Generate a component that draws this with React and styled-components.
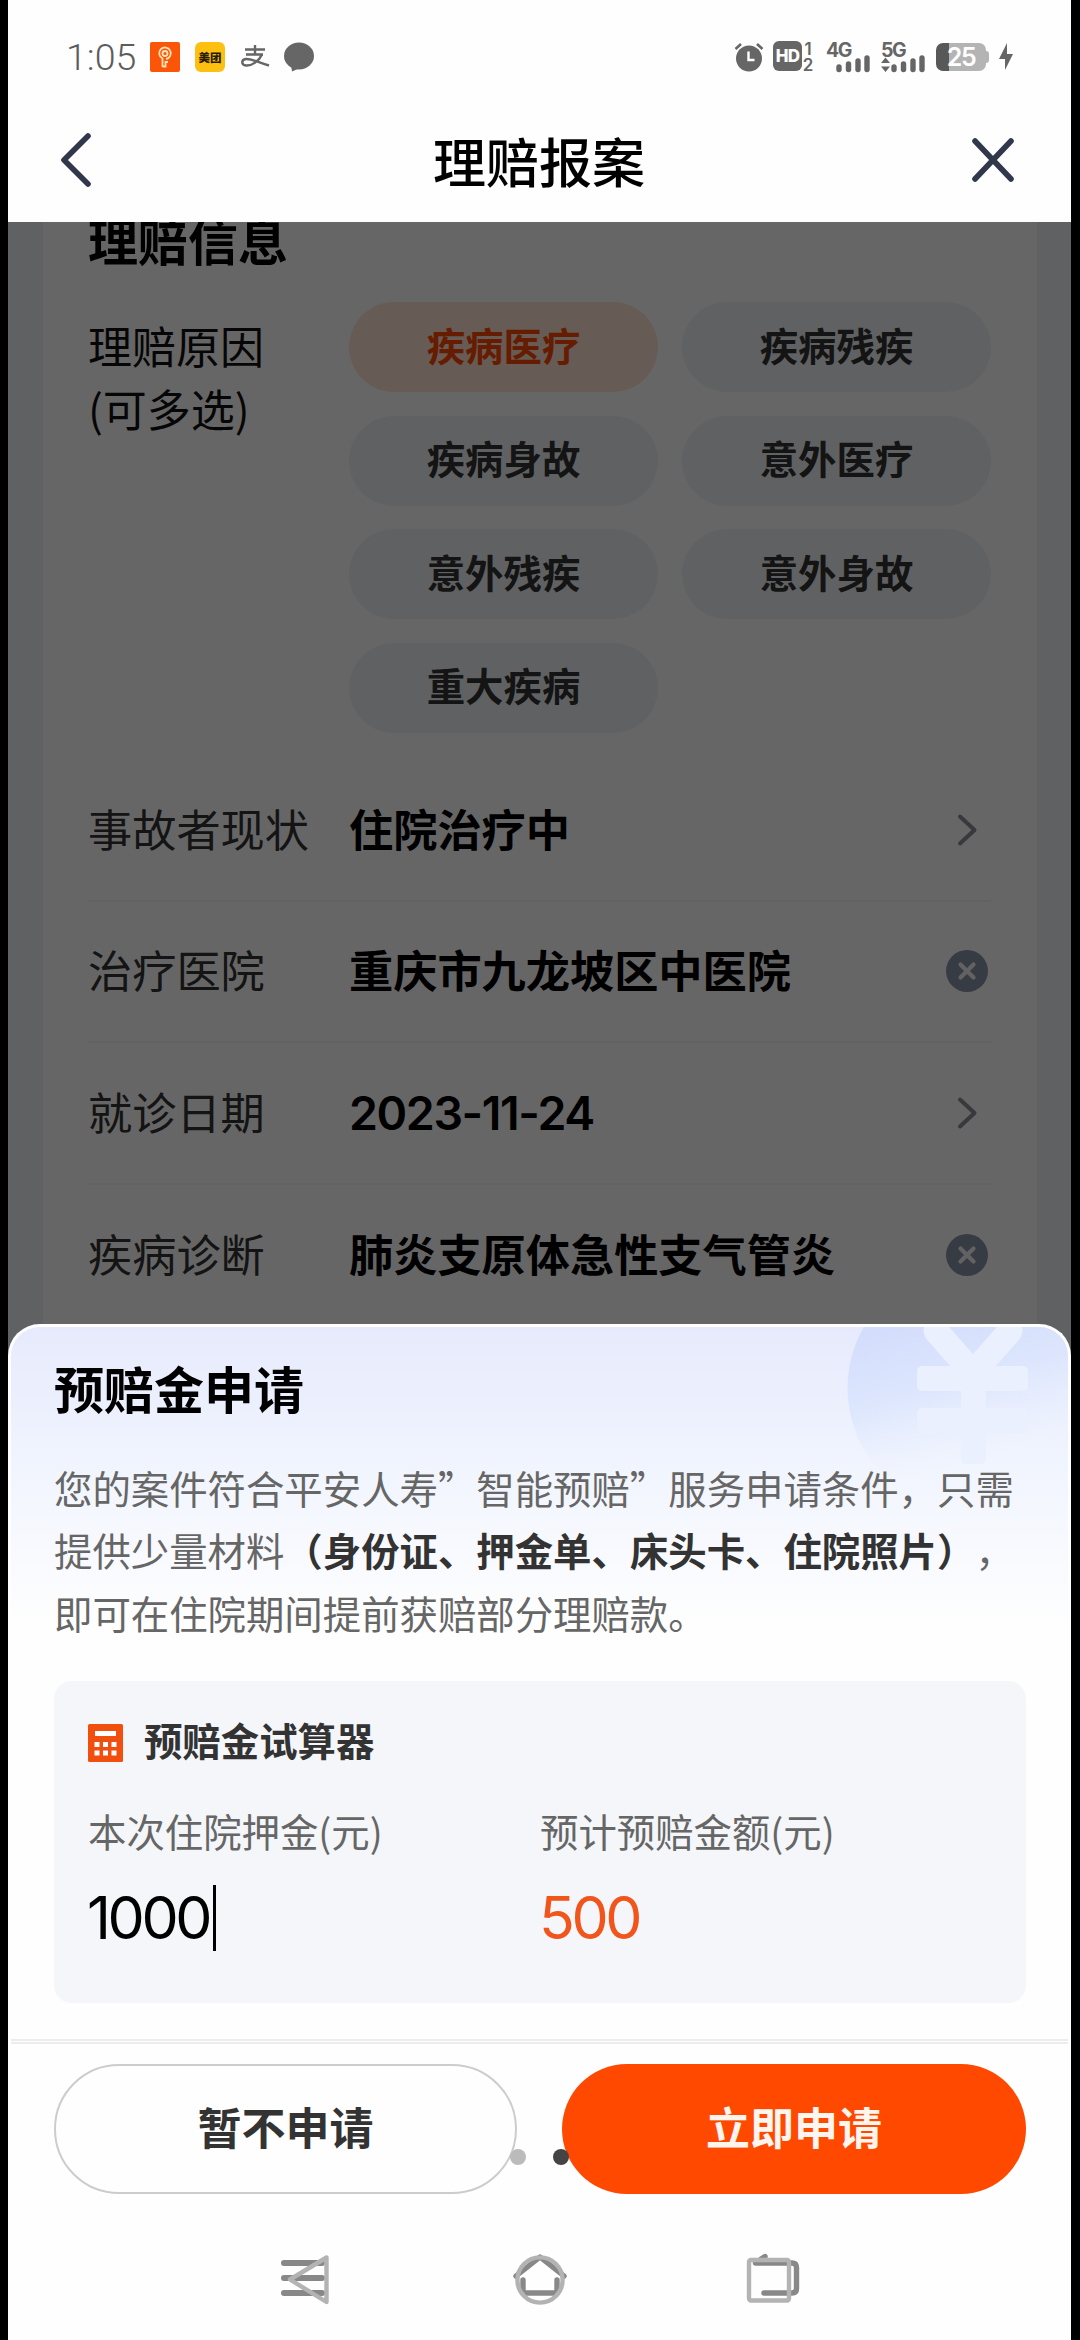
import styled, { createGlobalStyle } from 'styled-components'
import { useState } from 'react'

const reasons = [
  '疾病医疗',
  '疾病残疾',
  '疾病身故',
  '意外医疗',
  '意外残疾',
  '意外身故',
  '重大疾病'
]

const fields = [
  { label: '事故者现状', value: '住院治疗中', action: 'open' },
  { label: '治疗医院', value: '重庆市九龙坡区中医院', action: 'clear' },
  { label: '就诊日期', value: '2023-11-24', action: 'open', numeric: true },
  { label: '疾病诊断', value: '肺炎支原体急性支气管炎', action: 'clear' }
]

function StatusIcons() {
  return (
    <StatusGroup>
      <svg width="30" height="30" viewBox="0 0 30 30">
        <circle cx="15" cy="16.5" r="13" fill="#666" />
        <path d="M1.5 7 L7 2 M28.5 7 L23 2" stroke="#666" strokeWidth="2.6" />
        <path d="M14.5 9.5 V18 H20.5" fill="none" stroke="#fff" strokeWidth="2.4" />
      </svg>
      <HdGroup>
        <HdBadge>HD</HdBadge>
        <SimNumbers>
          <span>1</span>
          <span>2</span>
        </SimNumbers>
      </HdGroup>
      <Signal>
        <SignalLabel>4G</SignalLabel>
        <svg width="45" height="18" viewBox="0 0 45 18">
          <g stroke="#666" strokeWidth="5.4" strokeLinecap="round">
            <path d="M13 12 V14.5" />
            <path d="M22.5 9 V14.5" />
            <path d="M32 6 V14.5" />
            <path d="M41 3 V14.5" />
          </g>
        </svg>
      </Signal>
      <Signal>
        <SignalLabel>5G</SignalLabel>
        <svg width="45" height="18" viewBox="0 0 45 18">
          <path d="M0 8 L4.5 2.5 L9 8 Z M0 11.5 L4.5 17 L9 11.5 Z" fill="#666" />
          <g stroke="#666" strokeWidth="5.4" strokeLinecap="round">
            <path d="M13 12 V14.5" />
            <path d="M22.5 9 V14.5" />
            <path d="M32 6 V14.5" />
            <path d="M41 3 V14.5" />
          </g>
        </svg>
      </Signal>
      <BatteryGroup>
        <Battery>25</Battery>
        <BatteryTip />
        <svg width="14" height="28" viewBox="0 0 14 28">
          <path d="M8 0 L0 16 H6 L6 27 L14 11 H8 Z" fill="#666" />
        </svg>
      </BatteryGroup>
    </StatusGroup>
  )
}

function FieldAction({ type }) {
  if (type == 'clear') {
    return (
      <svg width="42" height="42" viewBox="0 0 42 42">
        <circle cx="21" cy="21" r="21" fill="#8b93a8" />
        <path
          d="M14.5 14.5 L27.5 27.5 M27.5 14.5 L14.5 27.5"
          stroke="#f4f4f4"
          strokeWidth="4.2"
          strokeLinecap="round"
        />
      </svg>
    )
  }
  return (
    <svg width="42" height="42" viewBox="0 0 42 42">
      <path
        d="M14 7.5 L28.5 21 L14 34.5"
        fill="none"
        stroke="#8c8c99"
        strokeWidth="4"
        strokeLinecap="round"
        strokeLinejoin="round"
      />
    </svg>
  )
}

function SystemNav() {
  return (
    <NavBar>
      <svg width="52" height="56" viewBox="0 0 52 56">
        <path
          d="M6 11 H44 M6 26 H44 M6 41 H44"
          stroke="#888"
          strokeWidth="6"
          strokeLinecap="round"
        />
        <path
          d="M12 27.5 L48.5 5.5 V50 Z"
          fill="none"
          stroke="#b3b3b3"
          strokeWidth="4.4"
          strokeLinejoin="round"
        />
      </svg>
      <svg width="60" height="56" viewBox="0 0 60 56">
        <path
          d="M6 24 L30 5 L54 24 M13 28 V41 H47 V28"
          fill="none"
          stroke="#888"
          strokeWidth="5.4"
          strokeLinecap="round"
          strokeLinejoin="round"
        />
        <circle cx="30" cy="28" r="22.6" fill="none" stroke="#b3b3b3" strokeWidth="4.4" />
      </svg>
      <svg width="58" height="56" viewBox="0 0 58 56">
        <path
          d="M19 4.5 L15 7 M9.5 11 H46 Q50.5 11 50.5 15.5 V36.5 Q50.5 41 46 41 H18"
          fill="none"
          stroke="#888"
          strokeWidth="5.4"
          strokeLinecap="round"
          strokeLinejoin="round"
        />
        <rect
          x="3"
          y="8"
          width="40"
          height="40.5"
          rx="2"
          fill="none"
          stroke="#b3b3b3"
          strokeWidth="4.4"
        />
      </svg>
    </NavBar>
  )
}

export default function App() {
  const [selected, setSelected] = useState(['疾病医疗'])
  const [deposit] = useState(1000)

  function toggleReason(reason) {
    setSelected(current =>
      current.includes(reason)
        ? current.filter(item => item != reason)
        : [...current, reason]
    )
  }

  return (
    <Device lang="zh-CN">
      <GlobalStyle />
      <Screen>
        <StatusBar>
          <Clock>1:05</Clock>
          <svg width="30" height="30" viewBox="0 0 30 30">
            <rect width="30" height="30" rx="2" fill="#fb5607" />
            <g fill="none" stroke="#ffe3b8" strokeWidth="1.8">
              <path d="M12.5 25 V16.5 A5.8 5.8 0 1 1 16 17" />
              <circle cx="15" cy="11.5" r="2.5" />
              <path d="M12.5 24.5 H15.5 V20 H18" />
            </g>
          </svg>
          <MeituanIcon>美团</MeituanIcon>
          <svg width="29" height="24" viewBox="0 0 29 24">
            <g fill="none" stroke="#666" strokeWidth="2.4">
              <path d="M4 4.5 H24 M14 0 V9 M5 9.5 H22" />
              <path d="M21 9.5 C18 16 11 21 5 20.5 C0 20 0 14.5 5 14 C11 13.5 18 18 28 20.5" />
            </g>
          </svg>
          <svg width="30" height="30" viewBox="0 0 30 30">
            <ellipse cx="15" cy="14" rx="15" ry="13.5" fill="#666" />
            <path d="M7 23 L8 29.5 L16 26 Z" fill="#666" />
          </svg>
          <StatusIcons />
        </StatusBar>
        <TitleBar>
          <svg width="34" height="56" viewBox="0 0 34 56">
            <path
              d="M29 4 L5 28 L29 52"
              fill="none"
              stroke="#31384b"
              strokeWidth="5.6"
              strokeLinecap="round"
              strokeLinejoin="round"
            />
          </svg>
          <PageTitle>理赔报案</PageTitle>
          <svg width="44" height="46" viewBox="0 0 44 46">
            <path
              d="M4 4 L40 42 M40 4 L4 42"
              stroke="#31384b"
              strokeWidth="5.6"
              strokeLinecap="round"
            />
          </svg>
        </TitleBar>

        <Page>
          <Card>
            <CardTitle>理赔信息</CardTitle>
            <ReasonRow>
              <ReasonLabel>
                理赔原因
                <br />
                (可多选)
              </ReasonLabel>
              <ReasonGrid>
                {reasons.map(reason => (
                  <Chip
                    key={reason}
                    $active={selected.includes(reason)}
                    onClick={() => toggleReason(reason)}
                  >
                    {reason}
                  </Chip>
                ))}
              </ReasonGrid>
            </ReasonRow>
            {fields.map(field => (
              <Field key={field.label}>
                <FieldLabel>{field.label}</FieldLabel>
                <FieldValue $numeric={field.numeric}>{field.value}</FieldValue>
                <FieldAction type={field.action} />
              </Field>
            ))}
          </Card>

          <Mask>
            <Sheet>
              <CoinArt width="240" height="190" viewBox="0 0 240 190">
                <defs>
                  <linearGradient
                    id="coin"
                    gradientUnits="userSpaceOnUse"
                    x1="40"
                    y1="0"
                    x2="80"
                    y2="150"
                  >
                    <stop offset="0" stopColor="#d3ddfc" />
                    <stop offset="0.5" stopColor="#dbe5fd" stopOpacity="0.9" />
                    <stop offset="1" stopColor="#eaf0fe" stopOpacity="0" />
                  </linearGradient>
                </defs>
                <circle cx="141.5" cy="61" r="122" fill="url(#coin)" />
                <g fill="#eaf0fe">
                  <rect x="89" y="39" width="111" height="25" rx="5" />
                  <rect x="89" y="81" width="111" height="25" rx="5" />
                  <rect x="133" y="39" width="25" height="98" rx="5" />
                </g>
                <path
                  d="M108 4 L145 46 M182 4 L145 46"
                  fill="none"
                  stroke="#eaf0fe"
                  strokeWidth="25"
                  strokeLinecap="round"
                />
              </CoinArt>
              <SheetTitle>预赔金申请</SheetTitle>
              <Notice>
                您的案件符合平安人寿”智能预赔”服务申请条件，只需提供少量材料
                <b>（身份证、押金单、床头卡、住院照片）</b>
                ，即可在住院期间提前获赔部分理赔款。
              </Notice>
              <Calculator>
                <CalculatorHead>
                  <svg width="35" height="38" viewBox="0 0 35 38">
                    <rect width="35" height="38" rx="1.5" fill="#f04f0e" />
                    <rect x="7" y="7" width="21" height="5" fill="#fff" />
                    <g fill="#fff">
                      <rect x="6.5" y="18" width="5" height="5" />
                      <rect x="15" y="18" width="5" height="5" />
                      <rect x="23.5" y="18" width="5" height="5" />
                      <rect x="6.5" y="26.5" width="5" height="5" />
                      <rect x="15" y="26.5" width="5" height="5" />
                      <rect x="23.5" y="26.5" width="5" height="5" />
                    </g>
                  </svg>
                  预赔金试算器
                </CalculatorHead>
                <Amounts>
                  <div>
                    <AmountLabel>本次住院押金(元)</AmountLabel>
                    <Amount>
                      {deposit}
                      <Caret />
                    </Amount>
                  </div>
                  <div>
                    <AmountLabel>预计预赔金额(元)</AmountLabel>
                    <Amount $highlight>{deposit / 2}</Amount>
                  </div>
                </Amounts>
              </Calculator>
              <Footer>
                <Button>暂不申请</Button>
                <Button $primary>立即申请</Button>
                <PagerDots>
                  <Dot />
                  <Dot $active />
                </PagerDots>
              </Footer>
              <SystemNav />
            </Sheet>
          </Mask>
        </Page>
      </Screen>
    </Device>
  )
}

const GlobalStyle = createGlobalStyle`
  * {
    box-sizing: border-box;
  }

  body {
    margin: 0;
    background: #000;
    font-family: 'Noto Sans CJK SC', sans-serif;
    text-spacing-trim: space-all;
  }

  svg {
    display: block;
    flex-shrink: 0;
  }
`

const Device = styled.div`
  width: 1080px;
  height: 2340px;
  padding: 0 9px 0 8px;
  background: #000;
  overflow: hidden;
`

const Screen = styled.div`
  height: 100%;
  display: flex;
  flex-direction: column;
  background: #fefefe;
`

const StatusBar = styled.div`
  height: 114px;
  padding: 0 58px 0 58px;
  display: flex;
  align-items: center;
`

const Clock = styled.span`
  width: 84px;
  font: 300 37.5px/44px Roboto, sans-serif;
  color: #5c5c5c;
`

const MeituanIcon = styled.span`
  width: 30px;
  height: 30px;
  margin: 0 16px 0 15px;
  border-radius: 6px;
  background: #fdc010;
  color: #2a1c00;
  font-size: 11.5px;
  font-weight: 900;
  line-height: 30px;
  text-align: center;

  & + svg {
    margin-right: 14px;
  }
`

const StatusGroup = styled.div`
  margin-left: auto;
  display: flex;
  align-items: center;
  color: #666;
  font-family: Inter, sans-serif;
`

const HdGroup = styled.div`
  margin: 0 12px 0 9px;
  display: flex;
`

const HdBadge = styled.span`
  width: 29px;
  height: 30px;
  border-radius: 6px;
  background: #666;
  color: #fff;
  font-size: 17px;
  font-weight: 800;
  line-height: 31px;
  letter-spacing: -0.8px;
  text-align: center;
`

const SimNumbers = styled.span`
  width: 12px;
  display: flex;
  flex-direction: column;
  font-size: 17px;
  font-weight: 600;
  line-height: 16px;
  text-align: center;
`

const Signal = styled.div`
  width: 45px;
  height: 31px;
  margin-right: 10px;
`

const SignalLabel = styled.div`
  height: 13px;
  font-size: 19.5px;
  font-weight: 700;
  line-height: 16px;
  letter-spacing: -1.4px;
`

const BatteryGroup = styled.div`
  display: flex;
  align-items: center;
`

const Battery = styled.span`
  width: 50px;
  height: 28px;
  border-radius: 7px;
  background: linear-gradient(90deg, #585858 13px, #b4b4b4 13px);
  color: #fff;
  font-size: 25px;
  font-weight: 600;
  line-height: 29px;
  letter-spacing: -1.5px;
  text-align: center;
`

const BatteryTip = styled.span`
  width: 3px;
  height: 12px;
  margin-right: 10px;
  border-radius: 0 3px 3px 0;
  background: #b4b4b4;
`

const TitleBar = styled.header`
  height: 108px;
  padding: 0 56px 16px 51px;
  display: flex;
  align-items: center;
  justify-content: space-between;
`

const PageTitle = styled.h1`
  margin: 0 0 0 14px;
  font-size: 53px;
  font-weight: 500;
  line-height: 80px;
  color: #000;
`

const Page = styled.main`
  position: relative;
  flex: 1;
  overflow: hidden;
  padding: 0 34px 0 35px;
  background: #f0f3f7;
`

const Card = styled.section`
  height: 1200px;
  padding: 0 46px 0 45px;
  background: #fff;
`

const CardTitle = styled.h2`
  height: 80px;
  margin: 0;
  font-size: 50px;
  font-weight: 700;
  line-height: 34px;
  color: #000;
`

const ReasonRow = styled.div`
  height: 458px;
  display: flex;
`

const ReasonLabel = styled.div`
  width: 262px;
  margin-top: 12px;
  font-size: 44px;
  line-height: 63px;
  color: #111;
`

const ReasonGrid = styled.div`
  display: grid;
  grid-template-columns: 309px 309px;
  grid-auto-rows: 90px;
  gap: 23.6px 24px;
`

const Chip = styled.button`
  padding: 0 0 7px;
  border: 0;
  border-radius: 45px;
  background: ${props => (props.$active ? '#ffe4d5' : '#f0f3f6')};
  color: ${props => (props.$active ? '#ff4800' : '#333')};
  font-family: inherit;
  font-size: 38.4px;
  font-weight: 700;
`

const Field = styled.div`
  height: 141.6px;
  padding-right: 3px;
  display: flex;
  align-items: center;
  border-bottom: 2px solid #f4f4f4;
`

const FieldLabel = styled.span`
  width: 261px;
  padding-bottom: 4px;
  font-size: 44.2px;
  font-weight: 400;
  color: #333;
`

const FieldValue = styled.span`
  flex: 1;
  padding-bottom: ${props => (props.$numeric ? '0' : '4px')};
  font-family: ${props => (props.$numeric ? 'Inter, sans-serif' : 'inherit')};
  font-size: ${props => (props.$numeric ? '46.5px' : '44.2px')};
  font-weight: ${props => (props.$numeric ? 600 : 700)};
  letter-spacing: ${props => (props.$numeric ? '-1.4px' : 'normal')};
  color: #000;
`

const Mask = styled.div`
  position: absolute;
  inset: 0;
  display: flex;
  flex-direction: column;
  justify-content: flex-end;
  background: rgba(0, 0, 0, 0.6);
`

const Sheet = styled.div`
  position: relative;
  height: 1016.5px;
  overflow: hidden;
  border: 3px solid #fefefe;
  border-bottom: 0;
  border-radius: 32px 32px 0 0;
  background: linear-gradient(#e6eafc, #f0f4fe 130px, #fefefe 300px);
`

/* faded yuan coin in the sheet corner */
const CoinArt = styled.svg`
  position: absolute;
  top: 0;
  right: 0;
`

const SheetTitle = styled.h2`
  position: relative;
  height: 129px;
  margin: 0;
  padding-left: 43px;
  font-size: 50px;
  font-weight: 700;
  line-height: 120px;
  color: #000;
`

const Notice = styled.p`
  position: relative;
  width: 975px;
  margin: 0 0 38px 43px;
  font-size: 38.4px;
  line-height: 62.6px;
  color: #666;

  b {
    color: #333;
  }
`

const Calculator = styled.section`
  width: 972px;
  height: 322px;
  margin-left: 43px;
  padding: 30px 36px 0 34px;
  border-radius: 18px;
  background: #f4f6fa;
`

const CalculatorHead = styled.div`
  height: 56px;
  display: flex;
  align-items: center;
  gap: 21px;
  font-size: 38.4px;
  font-weight: 700;
  color: #333;

  svg {
    margin-top: 7px;
  }
`

const Amounts = styled.div`
  margin-top: 35px;
  display: grid;
  grid-template-columns: 452px 1fr;
`

const AmountLabel = styled.div`
  font-size: 38.4px;
  line-height: 56px;
  color: #666;
`

const Amount = styled.div`
  height: 66px;
  margin: 27px 0 0 -1px;
  display: flex;
  align-items: center;
  font-family: Inter, sans-serif;
  font-size: 59px;
  line-height: 66px;
  letter-spacing: -3.4px;
  color: ${props => (props.$highlight ? '#f2551c' : '#000')};
`

const Caret = styled.span`
  width: 3px;
  height: 66px;
  margin-left: 4px;
  background: #000;
`

const Footer = styled.div`
  position: relative;
  height: 156px;
  margin: 36px -3px 0;
  padding: 20px 45px 0 46px;
  display: flex;
  justify-content: space-between;
  border-top: 5px double #ececec;
`

const Button = styled.button`
  width: ${props => (props.$primary ? '464px' : '463px')};
  height: 130px;
  padding: 0 0 7px;
  border: ${props => (props.$primary ? '0' : '2px solid #ccc')};
  border-radius: 65px;
  background: ${props => (props.$primary ? '#ff4800' : 'transparent')};
  color: ${props => (props.$primary ? '#fff5ef' : '#333')};
  font-family: inherit;
  font-size: 44px;
  font-weight: 700;
`

const PagerDots = styled.div`
  position: absolute;
  left: 502px;
  top: 105px;
  display: flex;
  gap: 27px;
`

const Dot = styled.span`
  width: 16px;
  height: 16px;
  border-radius: 50%;
  background: ${props => (props.$active ? '#444' : '#bbb')};
`

const NavBar = styled.nav`
  margin-top: 57px;
  padding-left: 267px;
  display: flex;
  gap: 180px;

  svg:last-child {
    margin-left: -4px;
  }
`
